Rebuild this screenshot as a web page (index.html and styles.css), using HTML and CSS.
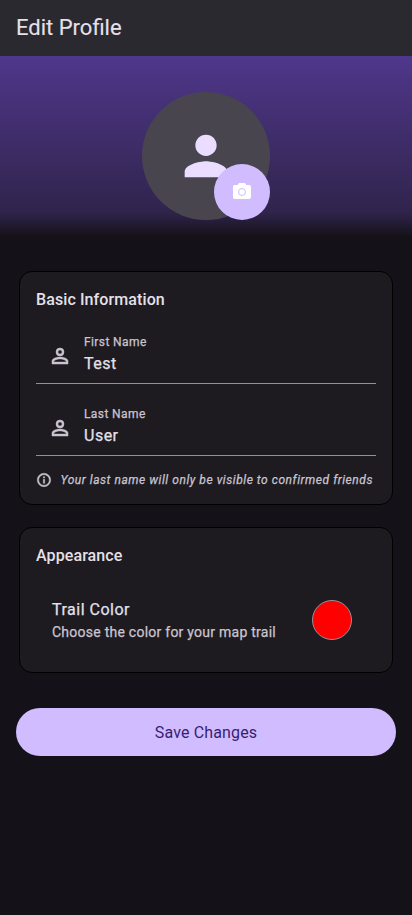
FILE: index.html
```html
<!DOCTYPE html>
<html lang="en">
<head>
<meta charset="utf-8">
<meta name="viewport" content="width=device-width, initial-scale=1">
<title>Edit Profile</title>
<link rel="stylesheet" href="styles.css">
</head>
<body>
<header class="app-bar"><h1><span>Edit Profile</span></h1></header>
<main>
  <section class="hero">
    <div class="avatar">
      <svg class="avatar-icon" viewBox="0 0 24 24"><path d="M12 12c2.21 0 4-1.79 4-4s-1.79-4-4-4-4 1.79-4 4 1.79 4 4 4zm0 2c-2.67 0-8 1.34-8 4v2h16v-2c0-2.66-5.33-4-8-4z"/></svg>
      <button class="camera" aria-label="Change photo">
        <svg viewBox="0 0 18 18"><path d="M6.4 0h5.2q.5 0 .8.4L13.4 2H16.2Q18 2 18 3.8V14.2Q18 16 16.2 16H1.8Q0 16 0 14.2V3.8Q0 2 1.8 2H4.6L5.6.4Q5.9 0 6.4 0z"/><circle class="lens" cx="9" cy="9" r="3.5"/></svg>
      </button>
    </div>
  </section>
  <section class="card basic">
    <h2><span>Basic Information</span></h2>
    <div class="field">
      <svg class="field-icon" viewBox="0 0 24 24"><path d="M12 5.9a2.1 2.1 0 1 1 0 4.2 2.1 2.1 0 0 1 0-4.2m0 9c2.97 0 6.1 1.46 6.1 2.1v1.1H5.9V17c0-.64 3.13-2.1 6.1-2.1M12 4a4 4 0 1 0 0 8 4 4 0 0 0 0-8zm0 9c-2.67 0-8 1.34-8 4v3h16v-3c0-2.66-5.33-4-8-4z"/></svg>
      <div><div class="label"><span>First Name</span></div><div class="value"><span>Test</span></div></div>
    </div>
    <div class="field">
      <svg class="field-icon" viewBox="0 0 24 24"><path d="M12 5.9a2.1 2.1 0 1 1 0 4.2 2.1 2.1 0 0 1 0-4.2m0 9c2.97 0 6.1 1.46 6.1 2.1v1.1H5.9V17c0-.64 3.13-2.1 6.1-2.1M12 4a4 4 0 1 0 0 8 4 4 0 0 0 0-8zm0 9c-2.67 0-8 1.34-8 4v3h16v-3c0-2.66-5.33-4-8-4z"/></svg>
      <div><div class="label"><span>Last Name</span></div><div class="value"><span>User</span></div></div>
    </div>
    <div class="note">
      <svg viewBox="0 0 24 24"><path d="M11 7h2v2h-2zm0 4h2v6h-2zm1-9C6.48 2 2 6.48 2 12s4.48 10 10 10 10-4.48 10-10S17.52 2 12 2zm0 18c-4.41 0-8-3.59-8-8s3.59-8 8-8 8 3.59 8 8-3.59 8-8 8z"/></svg>
      <span>Your last name will only be visible to confirmed friends</span>
    </div>
  </section>
  <section class="card appearance">
    <h2><span>Appearance</span></h2>
    <div class="setting">
      <div><div class="setting-title"><span>Trail Color</span></div><div class="setting-text"><span>Choose the color for your map trail</span></div></div>
      <div class="swatch"></div>
    </div>
  </section>
  <button class="save"><span>Save Changes</span></button>
</main>
</body>
</html>
```
FILE: styles.css
```css
* { box-sizing: border-box; }
body {
  margin: 0;
  min-height: 915px;
  background: #141218;
  color: #e6e0e9;
  font-family: Roboto, sans-serif;
  -webkit-text-stroke: .25px currentColor;
}
h1, h2 { margin: 0; }
svg { display: block; fill: currentColor; flex: none; }
button { border: 0; padding: 0; font-family: inherit; }
.app-bar {
  height: 56px;
  padding: 0 16px;
  display: flex;
  align-items: center;
  background: #2b2930;
}
h1 {
  font-size: 22px;
  line-height: 28px;
  font-weight: 400;
  -webkit-text-stroke-width: .1px;
}
.hero {
  height: 180px;
  padding-top: 36px;
  background: linear-gradient(#4f378b 0, #30244c 156px, #141218 181px);
}
.avatar {
  position: relative;
  width: 128px;
  height: 128px;
  margin: 0 auto;
  display: grid;
  place-items: center;
  border-radius: 50%;
  background: #49454f;
}
.avatar-icon { width: 64px; height: 64px; color: #eaddff; }
.camera {
  position: absolute;
  right: 0;
  bottom: 0;
  width: 56px;
  height: 56px;
  display: grid;
  place-items: center;
  border-radius: 50%;
  background: #d0bcff;
  color: #fff;
}
.camera svg { width: 18px; height: 18px; }
.lens { fill: none; stroke: #d0bcff; stroke-width: 1; }
.card {
  margin: 0 19px;
  padding: 16px;
  border: 1px solid #000;
  border-radius: 13px;
  background: #1d1b20;
}
.basic { margin-top: 35px; height: 234px; }
.appearance { margin-top: 22px; height: 146px; }
h2 {
  font-size: 16px;
  line-height: 24px;
  font-weight: 500;
  letter-spacing: .1px;
  -webkit-text-stroke-width: 0;
}
.field {
  height: 56px;
  padding-left: 12px;
  display: flex;
  align-items: center;
  gap: 12px;
  border-bottom: 1px solid #938f99;
}
h2 + .field { margin-top: 16px; }
.field + .field { margin-top: 16px; }
.field-icon {
  width: 24px;
  height: 24px;
  color: #cac4d0;
  stroke: currentColor;
  stroke-width: .5;
}
.label {
  margin-top: -2px;
  padding-bottom: 2px;
  font-size: 12px;
  line-height: 16px;
  letter-spacing: .4px;
  color: #cac4d0;
}
.value { font-size: 16px; line-height: 24px; letter-spacing: .5px; }
.note {
  margin-top: 16px;
  display: flex;
  align-items: center;
  gap: 8.5px;
  color: #cac4d0;
  font-size: 12px;
  line-height: 16px;
  letter-spacing: .55px;
  font-style: italic;
  white-space: nowrap;
}
.note svg { width: 16px; height: 16px; stroke: currentColor; stroke-width: .7; }
.setting {
  margin-top: 14px;
  padding: 16px 24px 16px 16px;
  display: flex;
  align-items: center;
  justify-content: space-between;
}
.setting-title { font-size: 16px; line-height: 24px; letter-spacing: .5px; }
.setting-text { font-size: 14px; line-height: 20px; letter-spacing: .25px; color: #cac4d0; }
.swatch {
  width: 40px;
  height: 40px;
  border: 1px solid #938f99;
  border-radius: 50%;
  background: #f00;
}
.save {
  display: block;
  width: 380px;
  height: 48px;
  margin: 35px auto 0;
  padding-top: 1px;
  border-radius: 24px;
  background: #d0bcff;
  color: #381e72;
  font-size: 16px;
  line-height: 24px;
  letter-spacing: .15px;
  -webkit-text-stroke-width: 0;
}
```
